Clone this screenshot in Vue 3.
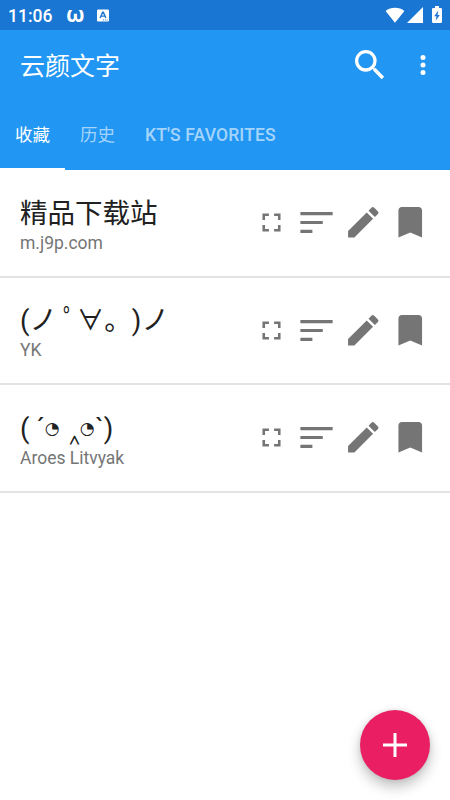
<script setup>
const items = [
  { text: ['精品下载站'], author: 'm.j9p.com' },
  { text: ['(ノ ﾟ∀。)ノ'], author: 'YK' },
  { text: ['( ´', '◔', ' ‸', '◔', '`)'], author: 'Aroes Litvyak' },
]
</script>

<template>
  <div class="screen">
    <div class="status">
      <span class="time">11:06</span>
      <span class="omega">ω</span>
      <svg class="lang" viewBox="0 0 13 13"><rect width="13" height="13" rx="1.4" fill="#fff" /><path d="M3.4 9.2 6.1 3h.8l2.7 6.2M4.5 7.2h4" fill="none" stroke="#1976d2" stroke-width="1.5" /><path d="M6.5 11.3h5" stroke="#1976d2" stroke-width="1" stroke-dasharray="1 1" /></svg>
      <span class="spacer"></span>
      <svg class="wifi" viewBox="0 0 20 16"><path d="M10 15.7.6 4C3.2 1.8 6.5.7 10 .7s6.8 1.1 9.4 3.3z" fill="#fff" /></svg>
      <svg class="signal" viewBox="0 0 16 16"><path d="M0 16 16 0v16z" fill="#fff" /></svg>
      <svg class="battery" viewBox="0 0 10 17"><path d="M3 0h4v2h1.7Q10 2 10 3.3v12.4Q10 17 8.7 17H1.3Q0 17 0 15.7V3.3Q0 2 1.3 2H3z" fill="#fff" /><path d="M6.3 4.5 2.2 10.3h2.3L3.7 14.8 7.8 8.9H5.5z" fill="#1976d2" /></svg>
    </div>

    <header class="toolbar">
      <h1>云颜文字</h1>
      <svg class="search" viewBox="0 0 24 24"><path d="M15.5 14h-.79l-.28-.27A6.47 6.47 0 0 0 16 9.5 6.5 6.5 0 1 0 9.5 16c1.61 0 3.09-.59 4.23-1.57l.27.28v.79l5 4.99L20.49 19l-4.99-5zm-6 0C7.01 14 5 11.99 5 9.5S7.01 5 9.5 5 14 7.01 14 9.5 11.99 14 9.5 14z" /></svg>
      <svg class="more" viewBox="0 0 24 24"><circle cx="12" cy="6" r="2" /><circle cx="12" cy="12" r="2" /><circle cx="12" cy="18" r="2" /></svg>
    </header>

    <nav class="tabs">
      <span class="tab cjk active">收藏</span>
      <span class="tab cjk">历史</span>
      <span class="tab">KT'S FAVORITES</span>
    </nav>

    <main>
      <div v-for="item in items" :key="item.author" class="row">
        <div class="copy">
          <div class="face"><span v-for="(part, i) in item.text" :key="i" :class="{ eye: part === '◔' }">{{ part }}</span></div>
          <div class="author">{{ item.author }}</div>
        </div>
        <div class="actions">
          <svg class="full" viewBox="0 0 24 24"><path d="M7 14H5v5h5v-2H7v-3zm-2-4h2V7h3V5H5v5zm12 7h-3v2h5v-5h-2v3zM14 5v2h3v3h2V5h-5z" /></svg>
          <svg class="sort" viewBox="0 0 24 24"><path d="M3 17.8h6.7v-1.7H3zM3 6.2v1.7h18V6.2zm0 6.6h12.5v-1.7H3z" /></svg>
          <svg class="edit" viewBox="0 0 24 24"><path d="M3 17.25V21h3.75L17.81 9.94l-3.75-3.75L3 17.25zM20.71 7.04a1 1 0 0 0 0-1.41l-2.34-2.34a1 1 0 0 0-1.41 0l-1.83 1.83 3.75 3.75 1.83-1.83z" /></svg>
          <svg class="mark" viewBox="0 0 24 24"><path d="M17 3H7c-1.1 0-2 .9-2 2v16l7-3 7 3V5c0-1.1-.9-2-2-2z" /></svg>
        </div>
      </div>
    </main>

    <button class="fab" aria-label="Add"><svg viewBox="0 0 24 24"><path d="M10.5 0h3v10.5H24v3H13.5V24h-3V13.5H0v-3h10.5z" /></svg></button>
  </div>
</template>

<style>
body { margin: 0; background: #fff; }
</style>

<style scoped>
.screen {
  position: relative;
  width: 450px;
  height: 800px;
  overflow: hidden;
  background: #fff;
  font-family: Roboto, "Noto Sans CJK SC", sans-serif;
  text-spacing-trim: space-all;
}
svg { display: block; flex: none; }
.status {
  display: flex;
  align-items: center;
  box-sizing: border-box;
  height: 30px;
  padding: 0 8px;
  background: #1976d2;
  color: #fff;
}
.time { width: 58px; padding-top: 2px; font-size: 17.5px; font-weight: 500; line-height: 28px; }
.omega { width: 31px; font-family: "Noto Sans", sans-serif; font-size: 21.5px; font-weight: 700; line-height: 26px; padding-bottom: 2px; }
.lang { width: 12px; height: 13px; margin-top: 1px; }
.spacer { flex: 1; }
.wifi { width: 20px; height: 16px; margin-right: 2px; }
.signal { width: 16px; height: 16px; margin-right: 9px; }
.battery { width: 10px; height: 17px; margin-bottom: 1px; }
.toolbar {
  display: flex;
  align-items: center;
  height: 70px;
  padding-left: 20px;
  background: #2196f3;
}
h1 { flex: 1; margin: 0; padding-top: 3px; color: #fff; font-size: 25px; font-weight: 400; line-height: 36px; }
.search { width: 40px; height: 40px; margin-right: 17.5px; fill: #fff; }
.more { width: 30px; height: 30px; margin-right: 12.5px; fill: #fff; }
.tabs { display: flex; height: 70px; background: #2196f3; }
.tab {
  box-sizing: border-box;
  height: 70px;
  padding: 0 15px;
  color: rgba(255, 255, 255, .6);
  font-size: 17.5px;
  font-weight: 500;
  line-height: 70px;
  letter-spacing: .15px;
  white-space: nowrap;
}
.cjk { font-weight: 400; letter-spacing: 0; }
.active { color: #fff; border-bottom: 2.5px solid #fff; }
.row {
  display: flex;
  box-sizing: border-box;
  height: 107.5px;
  padding-left: 20px;
  border-bottom: 2px solid #e3e3e3;
}
.copy { flex: 1; padding-top: 23.5px; white-space: pre; }
.face { height: 39px; color: #212121; font-size: 27.5px; line-height: 40px; }
.eye { display: inline-block; width: 17px; font-family: "DejaVu Sans", sans-serif; font-size: 17px; line-height: 20px; vertical-align: 4px; }
.eye:nth-child(4) { width: 15.5px; }
.author { color: #757575; font-size: 17.5px; line-height: 21px; }
.actions { display: flex; align-items: center; height: 105px; fill: #757575; }
.full { width: 31px; height: 31px; margin-right: 8px; }
.sort { width: 43px; height: 43px; margin-right: 5px; }
.edit { width: 40.5px; height: 40.5px; margin-right: 6.5px; }
.mark { width: 40.5px; height: 40.5px; margin-right: 20px; }
.fab {
  position: absolute;
  right: 20px;
  bottom: 20px;
  display: flex;
  align-items: center;
  justify-content: center;
  width: 70px;
  height: 70px;
  padding: 0;
  border: 0;
  border-radius: 50%;
  background: #e91e63;
  box-shadow: 0 7px 13px rgba(0, 0, 0, .24), 0 0 5px rgba(0, 0, 0, .1);
}
.fab svg { width: 24px; height: 24px; fill: #fff; }
</style>
